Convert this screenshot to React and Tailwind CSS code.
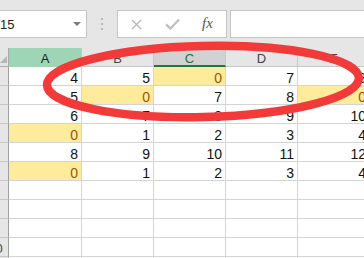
import React from 'react';

const cols = [
  { name: 'A', w: 'w-[73px]', head: 'bg-[#9fd5b7] text-[#222]' },
  { name: 'B', w: 'w-[72px]', head: 'bg-[#e6e6e6] text-[#444] border-b' },
  { name: 'C', w: 'w-[72px]', head: 'bg-[#d2d2d2] text-[#217346] border-b-2 border-b-[#217346]' },
  { name: 'D', w: 'w-[72px]', head: 'bg-[#e6e6e6] text-[#444] border-b' },
  { name: 'E', w: 'w-[72px]', head: 'bg-[#e6e6e6] text-[#444] border-b' },
];

// Y = highlighted zero
const rows = [
  [4, 5, 'Y', 7, 8],
  [5, 'Y', 7, 8, 'Y'],
  [6, 7, 8, 9, 10],
  ['Y', 1, 2, 3, 4],
  [8, 9, 10, 11, 12],
  ['Y', 1, 2, 3, 4],
  [], [], [], [], [],
];

function FormulaBar() {
  return (
    <div className="flex h-[48px] items-start pt-[10px]">
      <div className="flex h-[28px] w-[87px] shrink-0 items-center justify-between border border-l-0 border-[#c6c6c6] bg-white pr-[5px]">
        <span className="pt-[1px] text-[13px] leading-[15px] text-[#222]">15</span>
        <svg width="8" height="4" viewBox="0 0 8 4">
          <polygon points="0,0 8,0 4,4" fill="#7b7b7b" />
        </svg>
      </div>
      <div className="flex h-[28px] w-[30px] shrink-0 flex-col items-center justify-center gap-[3px]">
        <span className="h-[2px] w-[2px] bg-[#b9b9b9]" />
        <span className="h-[2px] w-[2px] bg-[#b9b9b9]" />
        <span className="h-[2px] w-[2px] bg-[#b9b9b9]" />
      </div>
      <div className="flex h-[28px] w-[110px] shrink-0 items-center border border-[#c6c6c6] bg-white pl-[13px]">
        <svg width="11" height="11" viewBox="0 0 11 11">
          <path d="M1 1 L10 10 M10 1 L1 10" stroke="#b8b8b8" strokeWidth="1.4" fill="none" />
        </svg>
        <svg className="ml-[23px]" width="15" height="12" viewBox="0 0 15 12">
          <path d="M1 6.5 L5.5 10.5 L14 1.5" stroke="#c2c2c2" strokeWidth="2.4" fill="none" />
        </svg>
        <span className="ml-[22px] pb-[2px] font-['Liberation_Serif',serif] text-[15px] italic leading-[15px] text-[#555]">fx</span>
      </div>
      <div className="ml-[3px] h-[28px] w-[140px] shrink-0 border border-[#c6c6c6] bg-white" />
    </div>
  );
}

function HeaderRow() {
  return (
    <div className="flex h-[19px]">
      <div className="flex h-[19px] w-[9px] shrink-0 items-end justify-end border-r border-b border-[#ababab] bg-[#e6e6e6] pr-[1px] pb-[1px]">
        <svg width="11" height="11" viewBox="0 0 11 11">
          <polygon points="11,0 11,11 0,11" fill="#b5b5b5" />
        </svg>
      </div>
      {cols.map((c) => (
        <div
          key={c.name}
          className={`${c.w} ${c.head} h-[19px] shrink-0 border-r border-[#c8c8c8] pt-[3px] text-center text-[13px] leading-[15px]`}
        >
          {c.name}
        </div>
      ))}
    </div>
  );
}

function DataRow({ values, n }) {
  return (
    <div className="flex h-[19px]">
      <div className="flex h-[19px] w-[9px] shrink-0 justify-end overflow-hidden border-r border-b border-r-[#9f9f9f] border-b-[#c6c6c6] bg-[#e6e6e6]">
        <div className="w-[25px] shrink-0 pt-[3px] text-center text-[13px] leading-[15px] text-[#444]">{n}</div>
      </div>
      {cols.map((c, i) => {
        const v = values[i];
        const hi = v === 'Y';
        return (
          <div
            key={c.name}
            className={`${c.w} h-[19px] shrink-0 overflow-hidden whitespace-nowrap border-r border-b border-[#d4d4d4] pr-[3px] pt-[4px] text-right text-[14px] leading-[15px] ${
              hi ? 'bg-[#ffeb9c] text-[#9c5700]' : 'bg-white text-[#111]'
            }`}
          >
            {hi ? 0 : v}
          </div>
        );
      })}
    </div>
  );
}

export default function App() {
  return (
    <div className="relative h-[258px] w-[364px] overflow-hidden bg-[#e6e6e6] font-['Liberation_Sans',sans-serif]">
      <FormulaBar />
      <div className="flex w-[400px] flex-col">
        <HeaderRow />
        {rows.map((r, i) => (
          <DataRow key={i} values={r} n={i + 1} />
        ))}
      </div>
      {/* red annotation drawn over the sheet */}
      <svg className="pointer-events-none absolute left-0 top-0" width="364" height="258">
        <ellipse
          cx="203"
          cy="81.5"
          rx="156"
          ry="35.5"
          transform="rotate(-1.3 203 81.5)"
          fill="none"
          stroke="#f23a3a"
          strokeWidth="8.5"
        />
      </svg>
    </div>
  );
}
